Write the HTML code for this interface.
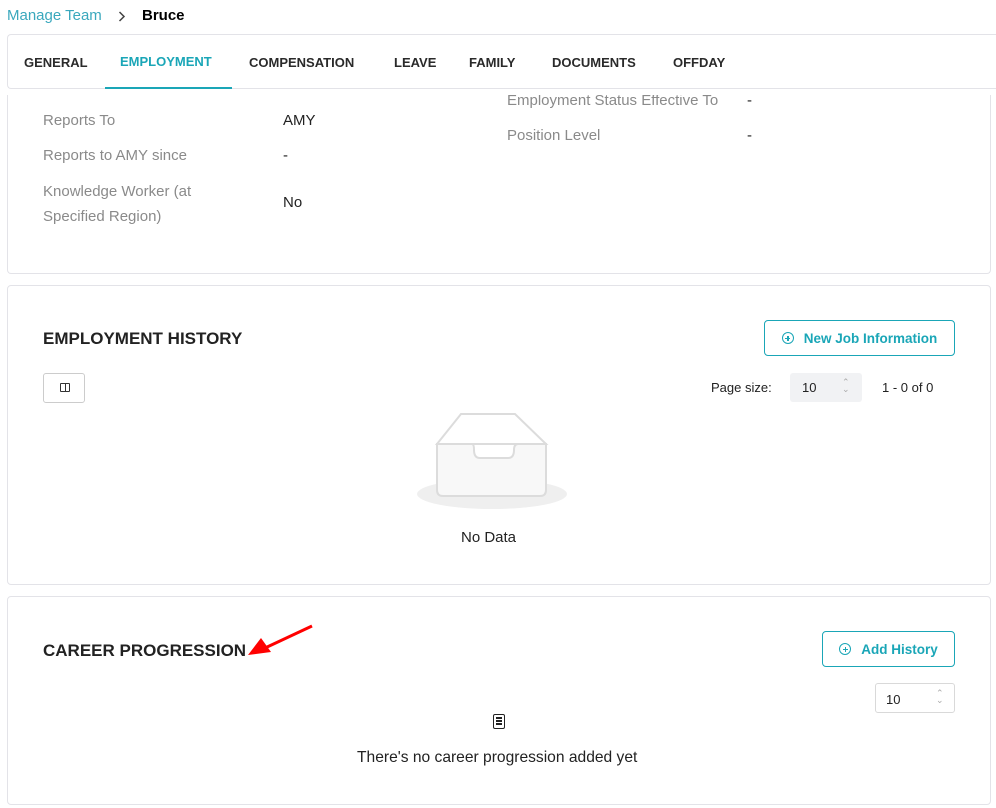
<!DOCTYPE html>
<html><head><style>
*{box-sizing:border-box;margin:0;padding:0}
body{width:996px;height:808px;background:#fff;font-family:"Liberation Sans",sans-serif;position:relative;overflow:hidden;color:#222}
.a{position:absolute;white-space:nowrap}
.card{position:absolute;left:7px;width:984px;border:1px solid #e3e3e8;border-radius:4px;background:#fff}
.lbl{color:#8a8a8a;font-size:15px}
.val{color:#222;font-size:15px}
.tab{position:absolute;top:20px;font-size:13px;font-weight:bold;color:#2a2a2a}
.btn{position:absolute;border:1px solid #1aa6b7;border-radius:4px;color:#1aa6b7;font-size:13.5px;font-weight:bold;display:flex;align-items:center;justify-content:center;gap:10px}
.ci{width:12px;height:12px;border:1.3px solid #1aa6b7;border-radius:50%;position:relative}
.ci:before{content:"";position:absolute;left:2.5px;top:4.5px;width:5px;height:1.3px;background:#1aa6b7}
.ci:after{content:"";position:absolute;left:4.5px;top:2.5px;width:1.3px;height:5px;background:#1aa6b7}
h2{position:absolute;font-size:17px;font-weight:bold;color:#222}
</style></head><body>
<div class="a" style="left:7px;top:7px;font-size:15px;color:#3aa8bd">Manage Team</div>
<svg style="position:absolute;left:118px;top:11px" width="8" height="11"><path d="M1.5 1 L6 5.5 L1.5 10" fill="none" stroke="#444" stroke-width="1.5"/></svg>
<div class="a" style="left:142px;top:7px;font-size:15px;font-weight:bold;color:#000">Bruce</div>

<div class="card" style="top:95px;height:179px;border-top:none;border-radius:0 0 4px 4px;overflow:hidden">
<div class="a lbl" style="left:35px;top:17px">Reports To</div>
<div class="a val" style="left:275px;top:17px">AMY</div>
<div class="a lbl" style="left:35px;top:52px">Reports to AMY since</div>
<div class="a val" style="left:275px;top:52px">-</div>
<div class="a lbl" style="left:35px;top:84px;line-height:25px">Knowledge Worker (at<br>Specified Region)</div>
<div class="a val" style="left:275px;top:99px">No</div>
<div class="a lbl" style="left:499px;top:-3px">Employment Status Effective To</div>
<div class="a val" style="left:739px;top:-3px">-</div>
<div class="a lbl" style="left:499px;top:32px">Position Level</div>
<div class="a val" style="left:739px;top:32px">-</div>
</div>

<div class="card" style="top:34px;height:55px;width:990px;border-radius:4px 0 0 4px;border-right:none">
<div class="tab" style="left:16px">GENERAL</div>
<div class="tab" style="left:112px;top:19px;color:#1aa6b7">EMPLOYMENT</div>
<div style="position:absolute;left:97px;top:52px;width:127px;height:2px;background:#1aa6b7"></div>
<div class="tab" style="left:241px">COMPENSATION</div>
<div class="tab" style="left:386px">LEAVE</div>
<div class="tab" style="left:461px">FAMILY</div>
<div class="tab" style="left:544px">DOCUMENTS</div>
<div class="tab" style="left:665px">OFFDAY</div>
</div>

<div class="card" style="top:285px;height:300px">
<h2 style="left:35px;top:43px">EMPLOYMENT HISTORY</h2>
<div class="btn" style="left:756px;top:34px;width:191px;height:36px"><span class="ci"></span>New Job Information</div>
<div style="position:absolute;left:35px;top:87px;width:42px;height:30px;border:1px solid #ccc;border-radius:3px"><div style="position:absolute;left:16px;top:9px;width:10px;height:9px;border:1.3px solid #333;border-radius:1px"></div><div style="position:absolute;left:20.5px;top:9px;width:1.3px;height:9px;background:#333"></div></div>
<div class="a" style="left:703px;top:94px;font-size:13px;color:#222">Page size:</div>
<div style="position:absolute;left:782px;top:87px;width:72px;height:29px;background:#f1f2f4;border-radius:3px"><span class="a" style="left:12px;top:7px;font-size:13px">10</span><span class="a" style="left:52px;top:6px;font-size:9px;color:#aaa;line-height:7px">⌃<br>⌄</span></div>
<div class="a" style="left:874px;top:94px;font-size:13px;color:#222">1 - 0 of 0</div>
<svg style="position:absolute;left:408px;top:126px" width="152" height="98" viewBox="0 0 152 98">
<ellipse cx="76" cy="82" rx="75" ry="15" fill="#efefef"/>
<path d="M21 32 L45 2 H99 L130 32 Z" fill="#fff" stroke="#dcdcdc" stroke-width="2"/>
<path d="M21 32 H56 Q58 32 58 38 Q58 46 64 46 H92 Q98 46 98 38 Q98 32 102 32 H130 V78 Q130 84 124 84 H27 Q21 84 21 78 Z" fill="#f8f8f8" stroke="#dcdcdc" stroke-width="2"/>
</svg>
<div class="a" style="left:453px;top:243px;font-size:15px;color:#222">No Data</div>
</div>

<div class="card" style="top:596px;height:209px">
<h2 style="left:35px;top:44px">CAREER PROGRESSION</h2>
<div class="btn" style="left:814px;top:34px;width:133px;height:36px"><span class="ci"></span>Add History</div>
<div style="position:absolute;left:867px;top:86px;width:80px;height:30px;border:1px solid #d9d9d9;border-radius:3px"><span class="a" style="left:10px;top:8px;font-size:13px">10</span><span class="a" style="left:60px;top:6px;font-size:9px;color:#aaa;line-height:7px">⌃<br>⌄</span></div>
<div style="position:absolute;left:485px;top:117px;width:12px;height:15px;border:1.5px solid #222;border-radius:2px"><div style="margin:2px 0 0 2px;width:6px;height:1.5px;background:#222;box-shadow:0 3px 0 #222,0 6px 0 #222"></div></div>
<div class="a" style="left:349px;top:152px;font-size:15.6px;color:#222">There's no career progression added yet</div>
</div>
<svg style="position:absolute;left:245px;top:622px" width="72" height="36"><line x1="67" y1="4" x2="20" y2="26" stroke="#f00" stroke-width="3"/><polygon points="3,33 16,16 26,30" fill="#f00"/></svg>
</body></html>
